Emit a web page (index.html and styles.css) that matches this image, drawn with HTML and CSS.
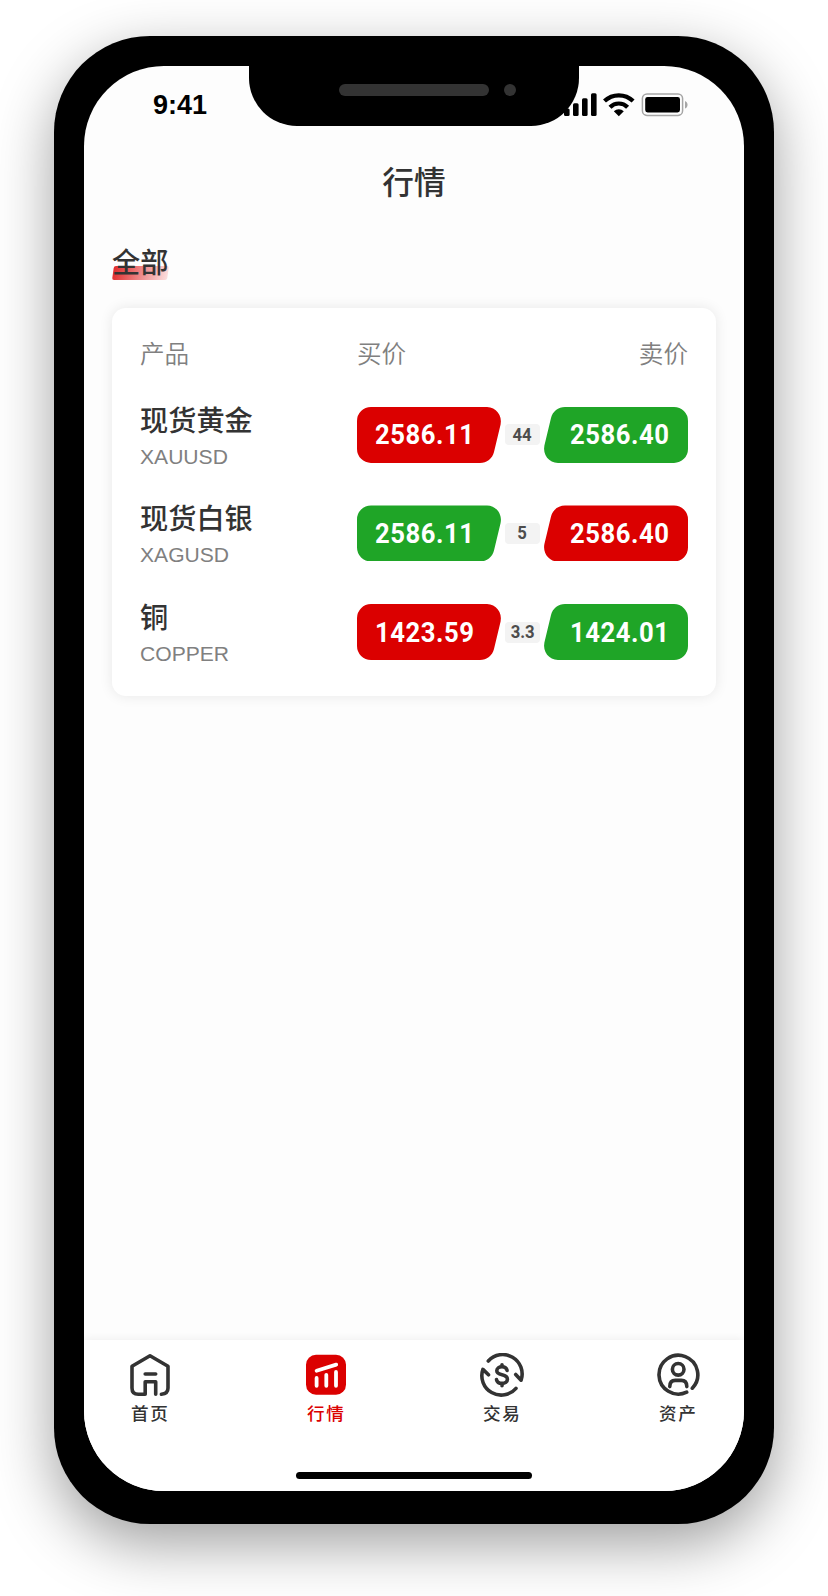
FILE: index.html
```html
<!DOCTYPE html>
<html lang="zh-CN">
  <head>
    <meta charset="UTF-8" />
    <meta name="viewport" content="width=device-width, initial-scale=1.0" />
    <title>行情</title>
    <link rel="stylesheet" href="styles.css">
  </head>
  <body>
    <div class="phone">
      <div class="notch">
        <span class="speaker"></span>
        <span class="camera"></span>
      </div>

      <div class="screen">
        <div class="status-bar">
          <span class="time">9:41</span>
          <svg class="status-icons" width="124" height="24" viewBox="0 0 124 24">
            <rect x="0" y="15.5" width="5.6" height="7.5" rx="1.5" />
            <rect x="9" y="10.3" width="5.6" height="12.7" rx="1.5" />
            <rect x="18" y="5.3" width="5.6" height="17.7" rx="1.5" />
            <rect x="27" y="0.3" width="5.6" height="22.7" rx="1.5" />
            <g fill="none" stroke="#000" stroke-width="4.2">
              <path d="M40.5 8.1a20.5 20.5 0 0 1 28.6 0" />
              <path d="M46 14.2a12.3 12.3 0 0 1 17.6 0" />
            </g>
            <path d="M49.8 18.2a7.4 7.4 0 0 1 10 0l-5 5z" />
            <rect x="78.4" y="1" width="40.2" height="21.4" rx="4.6" fill="none" stroke="#a6a6a6" stroke-width="1.5" />
            <rect x="81.2" y="4" width="34.8" height="15.4" rx="2.4" />
            <path d="M121 8c3.4 1.4 3.4 6.2 0 7.6z" fill="#a6a6a6" />
          </svg>
        </div>

        <h1 class="title">行情</h1>

        <div class="tabs">
          <span class="tab">全部</span>
        </div>

        <div class="card">
          <div class="row head">
            <span>产品</span>
            <span>买价</span>
            <span class="right">卖价</span>
          </div>
          <div class="row">
            <div class="product">
              <div class="name">现货黄金</div>
              <div class="symbol">XAUUSD</div>
            </div>
            <div class="quote">
              <div class="price buy red"><span>2586.11</span></div>
              <div class="spread"><span>44</span></div>
              <div class="price sell green"><span>2586.40</span></div>
            </div>
          </div>
          <div class="row">
            <div class="product">
              <div class="name">现货白银</div>
              <div class="symbol">XAGUSD</div>
            </div>
            <div class="quote">
              <div class="price buy green"><span>2586.11</span></div>
              <div class="spread"><span>5</span></div>
              <div class="price sell red"><span>2586.40</span></div>
            </div>
          </div>
          <div class="row">
            <div class="product">
              <div class="name">铜</div>
              <div class="symbol">COPPER</div>
            </div>
            <div class="quote">
              <div class="price buy red"><span>1423.59</span></div>
              <div class="spread"><span>3.3</span></div>
              <div class="price sell green"><span>1424.01</span></div>
            </div>
          </div>
        </div>

        <div class="bottom-bar">
          <div class="menu">
            <a class="menu-item">
              <svg class="icon" viewBox="0 0 44 44">
                <path d="M33.4 41.3c4.2-.4 6.6-2.6 6.6-6.3V13.3L22 2.8 4 13.3V35c0 4 2.2 6.3 6.3 6.3h6.9V28.7h10.5v12.6M17.2 21h10.5" />
              </svg>
              <span>首页</span>
            </a>
            <a class="menu-item active">
              <svg class="icon" viewBox="0 0 44 44">
                <rect class="fill" x="2" y="1.8" width="40" height="40" rx="10" />
                <path class="light" d="M12.6 25v7.8M22.3 21.8v11M32 19v13.8M12.6 17.8l19.6-6.2" />
              </svg>
              <span>行情</span>
            </a>
            <a class="menu-item">
              <svg class="icon" viewBox="0 0 44 44">
                <path d="M8.3 8a19.4 19.4 0 0 1 32.8 19.2l-5.4-5.7M36 35.3A19.4 19.4 0 0 1 2.9 16.4l5.6 5.4" />
                <path d="M27.1 17.4c-.6-2.400-2.600-3.600-5.100-3.600-3 0-5.200 1.500-5.200 4 0 5.700 10.600 2.400 10.600 8.400 0 2.800-2.400 4.200-5.400 4.200-3 0-5-1.400-5.500-3.800M22 11.800v2M22 30.400v2.400" />
              </svg>
              <span>交易</span>
            </a>
            <a class="menu-item">
              <svg class="icon" viewBox="0 0 44 44">
                <path d="M30.700 39.200A19.400 19.400 0 1 1 36.300 35.200" />
                <circle cx="22.200" cy="16.300" r="5.800" />
                <path d="M13.800 33.600c0-3.800 2-6.200 5.500-6.200h6c3.500 0 5.500 2.400 5.500 6.200" />
              </svg>
              <span>资产</span>
            </a>
          </div>
          <div class="home-line"></div>
        </div>
      </div>
    </div>
  </body>
</html>
```

FILE: styles.css
```css
* {
  box-sizing: border-box;
}

body {
  margin: 0;
  padding: 36px 54px 72px;
  background-color: #fff;
  color: #333;
  font-family: "Noto Sans CJK SC", sans-serif;
}

.phone {
  position: relative;
  width: 720px;
  height: 1488px;
  padding: 30px 30px 33px;
  border-radius: 96px;
  background-color: #000;
  box-shadow: 0 20px 60px rgba(0, 0, 0, 0.38);
}

/* Sits on top of the status bar */
.notch {
  position: absolute;
  top: 30px;
  left: 195px;
  width: 330px;
  height: 60px;
  padding: 18px 0 0 90px;
  display: flex;
  gap: 15px;
  border-radius: 0 0 48px 48px;
  background-color: #000;
}

.speaker {
  width: 150px;
  height: 12px;
  border-radius: 6px;
  background-color: #333;
}

.camera {
  width: 12px;
  height: 12px;
  border-radius: 50%;
  background-color: #333;
}

.screen {
  height: 1425px;
  display: flex;
  flex-direction: column;
  overflow: hidden;
  border-radius: 80px;
  background-color: #fdfdfd;
}

.status-bar {
  height: 77px;
  padding: 0 56px 0 69px;
  display: flex;
  justify-content: space-between;
  align-items: center;
  color: #000;
}

.time {
  padding-top: 2px;
  font-family: "Liberation Sans", Arial, sans-serif;
  font-size: 27px;
  font-weight: 700;
}

.title {
  margin: 0;
  height: 78px;
  line-height: 74px;
  font-size: 31.7px;
  font-weight: 500;
  text-align: center;
}

.tabs {
  padding: 19px 28px 0;
  height: 87px;
}

.tab {
  position: relative;
  z-index: 0;
  display: inline-block;
  line-height: 42px;
  font-size: 28.2px;
  font-weight: 500;
}

.tab::before {
  content: "";
  position: absolute;
  z-index: -1;
  left: 1px;
  bottom: 2px;
  width: 55px;
  height: 14px;
  border-radius: 2px;
  background: linear-gradient(100deg, #e12b2b, #fbe0e0);
  transform: skewX(-8deg);
}

.card {
  margin: 0 28px;
  height: 388px;
  padding: 13px 28px 0;
  border-radius: 14px;
  background-color: #fff;
  box-shadow: 0 0 14px rgba(0, 0, 0, 0.09);
}

.row {
  height: 98.6px;
  display: grid;
  grid-template-columns: 217px 331px;
  align-items: center;
}

.row.head {
  height: 61px;
  margin-bottom: 3.6px;
  grid-template-columns: 217px 1fr 1fr;
  font-size: 24.6px;
  font-weight: 350;
  color: #808080;
}

.right {
  text-align: right;
}

.name {
  line-height: 40px;
  font-size: 28.2px;
  font-weight: 500;
}

.symbol {
  padding-top: 2px;
  line-height: 32px;
  margin-bottom: -2px;
  font-family: "Liberation Sans", Arial, sans-serif;
  font-size: 21.1px;
  color: #808080;
}

.quote {
  display: flex;
  justify-content: space-between;
  align-items: center;
}

.price,
.spread {
  display: flex;
  justify-content: center;
  align-items: center;
  font-family: Roboto, sans-serif;
  font-weight: 700;
}

.price {
  width: 144px;
  height: 56px;
  font-size: 28.2px;
  color: #fff;
}

.price span {
  letter-spacing: 0.6px;
  transform: scaleX(0.91);
}

.buy {
  padding-right: 9px;
  clip-path: path("M14 0H130C139 0 145.5 8.5 143.6 17.5L137 45C135.5 51.5 129.7 56 123 56H14A14 14 0 0 1 0 42V14A14 14 0 0 1 14 0Z");
}

.sell {
  padding-left: 8px;
  clip-path: path("M130 0H21C14.3 0 8.5 4.5 7 11L0.4 38.5C-1.5 47.5 5 56 14 56H130A14 14 0 0 0 144 42V14A14 14 0 0 0 130 0Z");
}

.red {
  background-color: #db0000;
}

.green {
  background-color: #1fa527;
}

.spread {
  width: 35px;
  height: 21px;
  border-radius: 4px;
  background-color: #f3f3f3;
  font-size: 17.6px;
  color: #4d4d4d;
}

.spread span {
  transform: scaleX(0.95);
}

.bottom-bar {
  margin-top: auto;
  height: 151px;
  padding: 13px 44px 12px;
  display: flex;
  flex-direction: column;
  justify-content: space-between;
  align-items: center;
  background-color: #fff;
  box-shadow: 0 0 9px rgba(0, 0, 0, 0.07);
}

.menu {
  width: 100%;
  display: flex;
  justify-content: space-between;
}

.menu-item {
  width: 44px;
  display: flex;
  flex-direction: column;
  align-items: center;
  line-height: 32px;
  font-size: 17.6px;
  font-weight: 500;
  white-space: nowrap;
}

.menu-item span {
  letter-spacing: 1.7px;
  margin-right: -0.7px;
}

.menu-item.active {
  color: #db0000;
}

.icon {
  width: 44px;
  height: 44px;
  fill: none;
  stroke: #333;
  stroke-width: 3.6;
  stroke-linecap: round;
  stroke-linejoin: round;
}

.icon .fill {
  fill: #db0000;
  stroke: none;
}

.icon .light {
  stroke: #fff;
  stroke-width: 3.8;
}

.home-line {
  width: 236px;
  height: 7px;
  border-radius: 4px;
  background-color: #000;
}
```
